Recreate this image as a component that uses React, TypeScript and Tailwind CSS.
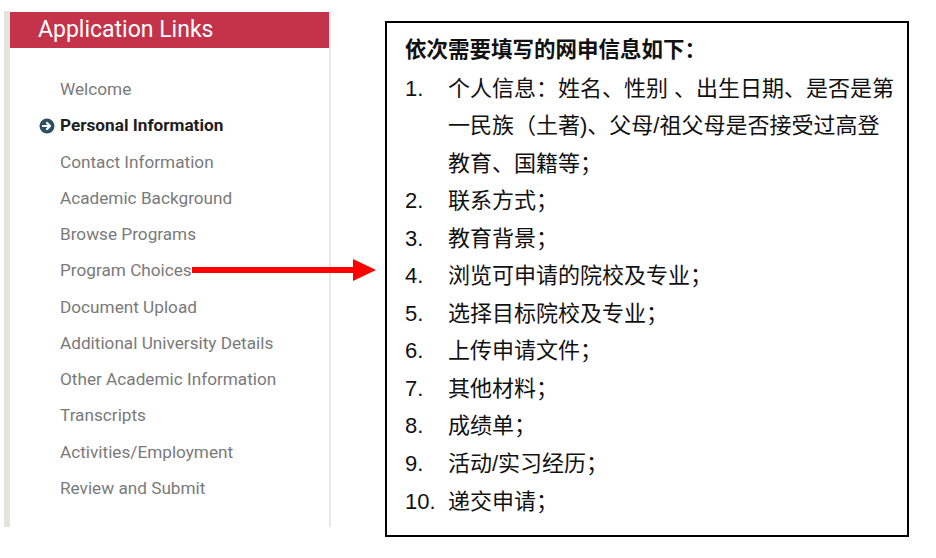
import React from "react";

const links = [
  "Welcome",
  "Personal Information",
  "Contact Information",
  "Academic Background",
  "Browse Programs",
  "Program Choices",
  "Document Upload",
  "Additional University Details",
  "Other Academic Information",
  "Transcripts",
  "Activities/Employment",
  "Review and Submit",
];

const items: { n: string; lines: string[] }[] = [
  {
    n: "1.",
    lines: [
      "个人信息：姓名、性别 、出生日期、是否是第",
      "一民族（土著)、父母/祖父母是否接受过高登",
      "教育、国籍等；",
    ],
  },
  { n: "2.", lines: ["联系方式；"] },
  { n: "3.", lines: ["教育背景；"] },
  { n: "4.", lines: ["浏览可申请的院校及专业；"] },
  { n: "5.", lines: ["选择目标院校及专业；"] },
  { n: "6.", lines: ["上传申请文件；"] },
  { n: "7.", lines: ["其他材料；"] },
  { n: "8.", lines: ["成绩单；"] },
  { n: "9.", lines: ["活动/实习经历；"] },
  { n: "10.", lines: ["递交申请；"] },
];

export default function App() {
  return (
    <div className="relative w-[936px] h-[558px] bg-white overflow-hidden">
      <div className="flex items-start">
        {/* Left panel */}
        <div className="ml-[4px] mt-[11px] flex h-[516px]">
          <div className="w-[6px] bg-[#e4e4dc]" />
          <div className="w-[321px] flex flex-col border-r-2 border-[#e8e8e8] pt-[1px]">
            <div
              className="h-[36px] bg-[#c5334a] pl-[28px] text-white text-[23px] leading-[36px]"
              style={{ fontFamily: "Roboto, 'Liberation Sans', sans-serif" }}
            >
              Application Links
            </div>
            <ul
              className="pt-[23px] flex flex-col"
              style={{ fontFamily: "Roboto, 'Liberation Sans', sans-serif" }}
            >
              {links.map((l, i) => (
                <li
                  key={l}
                  className={
                    "relative h-[36.27px] leading-[36.27px] pl-[50px] text-[17.2px] " +
                    (i === 1 ? "font-bold text-[#1e1e1e]" : "text-[#7a7a7a]")
                  }
                >
                  {i === 1 && (
                    <svg
                      className="absolute left-[29px] top-[10.5px]"
                      width="16"
                      height="16"
                      viewBox="0 0 16 16"
                    >
                      <circle cx="8" cy="8" r="7.5" fill="#2e5060" />
                      <path
                        d="M4 8 H10.5 M8 5 L11 8 L8 11"
                        stroke="#fff"
                        strokeWidth="2.2"
                        fill="none"
                        strokeLinecap="round"
                        strokeLinejoin="round"
                      />
                    </svg>
                  )}
                  {l}
                </li>
              ))}
            </ul>
          </div>
        </div>

        {/* Right box */}
        <div
          className="ml-[54px] mt-[21px] w-[524px] h-[516px] border-2 border-black pl-[18px] pt-[9px] text-[#111]"
          style={{ fontFamily: "'Liberation Sans', 'Noto Sans CJK SC', sans-serif" }}
        >
          <div className="text-[21.5px] font-bold leading-[37.5px]">依次需要填写的网申信息如下：</div>
          {items.map((it) => (
            <div key={it.n} className="flex text-[22px] leading-[37.55px]">
              <div className="w-[43px] shrink-0">{it.n}</div>
              <div className="flex flex-col whitespace-nowrap">
                {it.lines.map((ln) => (
                  <div key={ln}>{ln}</div>
                ))}
              </div>
            </div>
          ))}
        </div>
      </div>

      {/* Arrow overlay */}
      <svg
        className="absolute left-[192px] top-[259px]"
        width="184"
        height="22"
        viewBox="0 0 184 22"
      >
        <rect x="0" y="8" width="163" height="6" fill="#ff0000" />
        <polygon points="161,0 184,11 161,22" fill="#ff0000" />
      </svg>
    </div>
  );
}
